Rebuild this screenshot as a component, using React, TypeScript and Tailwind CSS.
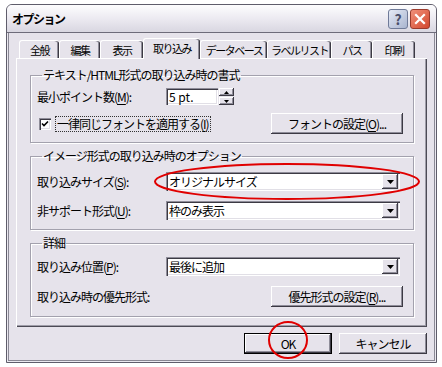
import React from "react";

// XP "silver" look: lavender-grey face, white/dark bevels
const face = "bg-[#e6e3eb]";
const raised =
  "shadow-[inset_-1px_-1px_0_#3c3a44,inset_1px_1px_0_#ffffff,inset_-2px_-2px_0_#8f8d99]";
const sunken =
  "shadow-[inset_1px_1px_0_#8f8d99,inset_2px_2px_0_#3c3a44,inset_-1px_-1px_0_#ffffff,inset_-2px_-2px_0_#e1dfe6]";

function Key({ children }: { children: React.ReactNode }) {
  return <span className="underline underline-offset-[2px]">{children}</span>;
}

function Arrow() {
  return (
    <svg width="7" height="4" viewBox="0 0 7 4">
      <path d="M0 0h7L3.5 4z" fill="#000" />
    </svg>
  );
}

function Select({ value }: { value: string }) {
  return (
    <div className={`flex h-[19px] w-[234px] items-center bg-white p-[2px] ${sunken}`}>
      <span className="flex-1 pl-[1px] leading-[15px]">{value}</span>
      <div className={`flex h-[15px] w-[16px] items-center justify-center ${face} ${raised}`}>
        <Arrow />
      </div>
    </div>
  );
}

function Button({ children, w, def }: { children: React.ReactNode; w: string; def?: boolean }) {
  return (
    <div className={`${w} ${def ? "border border-black" : ""}`}>
      <div
        className={`flex items-center justify-center ${def ? "h-[19px]" : "h-[21px]"} ${face} ${raised}`}
      >
        {children}
      </div>
    </div>
  );
}

function Row({ label, children }: { label: React.ReactNode; children: React.ReactNode }) {
  return (
    <div className="flex items-center">
      <span className="w-[129px]">{label}</span>
      {children}
    </div>
  );
}

function Group({
  title,
  className,
  children,
}: {
  title: string;
  className: string;
  children: React.ReactNode;
}) {
  return (
    <fieldset
      className={`mx-[13px] border border-[#a3a1ad] pl-[6px] pr-[10px] shadow-[1px_1px_0_#ffffff,inset_1px_1px_0_#ffffff] ${className}`}
    >
      <legend className="ml-[5px] px-[1px] leading-[14px]">{title}</legend>
      {children}
    </fieldset>
  );
}

const tabs = [
  { t: "全般", w: "w-[40px]" },
  { t: "編集", w: "w-[41px]" },
  { t: "表示", w: "w-[43px]" },
  { t: "取り込み", w: "w-[57px]", on: true },
  { t: "データベース", w: "w-[67px]" },
  { t: "ラベルリスト", w: "w-[64px]" },
  { t: "パス", w: "w-[41px]" },
  { t: "印刷", w: "w-[43px]" },
];

export default function App() {
  return (
    <div className="relative h-[367px] w-[442px] overflow-hidden whitespace-nowrap bg-white pt-[4px] font-['Noto_Sans_CJK_JP',sans-serif] text-[12px] leading-[14px] tracking-[-1px] text-black">
      <div
        className={`ml-[6px] h-[359px] w-[431px] rounded-t-[6px] border border-[#5f5d6b] ${face} shadow-[inset_0_0_0_1px_#ebe9f0,inset_0_0_0_2px_#8a8894]`}
      >
        {/* Title bar */}
        <div className="flex h-[28px] items-center justify-between rounded-t-[5px] border-b border-[#6e6c7a] bg-gradient-to-b from-[#fdfdfe] via-[#eceaf1] to-[#d9d7e1] pl-[5px] pr-[6px]">
          <span className="text-[12px] font-bold tracking-[-1.5px]">オプション</span>
          <div className="flex gap-[2px] tracking-normal">
            <div className="flex h-[20px] w-[20px] items-center justify-center rounded-[3px] border border-[#6f7a98] bg-gradient-to-br from-[#e6ebf6] to-[#a9b4cf] text-[14px] font-bold leading-none text-[#4a4f6a]">
              ?
            </div>
            <div className="flex h-[20px] w-[20px] items-center justify-center rounded-[3px] border border-[#9a3a2c] bg-gradient-to-br from-[#f0907a] to-[#d2452c]">
              <svg width="12" height="12" viewBox="0 0 12 12">
                <path d="M2 2l8 8M10 2l-8 8" stroke="#fff" strokeWidth="2.2" strokeLinecap="square" />
              </svg>
            </div>
          </div>
        </div>

        <div className="pl-[9px] pr-[9px] pt-[5px]">
          {/* Tabs */}
          <div className="flex h-[20px] items-end pl-[3px] text-[11px] tracking-[-1.5px]">
            {tabs.map((tab) => (
              <div
                key={tab.t}
                className={`${tab.w} flex items-center justify-center rounded-t-[3px] border-l border-t border-white shadow-[inset_-1px_0_0_#3c3a44,inset_-2px_0_0_#8f8d99] ${face} ${
                  tab.on ? "relative z-10 -mb-[1px] h-[21px] pb-[3px]" : "h-[18px]"
                }`}
              >
                {tab.t}
              </div>
            ))}
          </div>

          {/* Tab panel */}
          <div className="h-[269px] border-l border-t border-white shadow-[inset_-1px_-1px_0_#4c4a55,inset_-2px_-2px_0_#9f9da8]">
            <Group title="テキスト/HTML形式の取り込み時の書式" className="mt-[9px] pb-[8px] pt-[6px]">
              <Row
                label={
                  <>
                    最小ポイント数(<Key>M</Key>):
                  </>
                }
              >
                <div className="flex h-[17px]">
                  <div className={`flex w-[52px] items-center bg-white pl-[3px] tracking-normal ${sunken}`}>5 pt.</div>
                  <div className="ml-[1px] flex w-[15px] flex-col">
                    <div className={`flex h-[8px] items-center justify-center ${face} ${raised}`}>
                      <svg width="5" height="3" viewBox="0 0 5 3">
                        <path d="M0 3h5L2.5 0z" fill="#000" />
                      </svg>
                    </div>
                    <div className={`mt-[1px] flex h-[8px] items-center justify-center ${face} ${raised}`}>
                      <svg width="5" height="3" viewBox="0 0 5 3">
                        <path d="M0 0h5L2.5 3z" fill="#000" />
                      </svg>
                    </div>
                  </div>
                </div>
              </Row>
              <div className="mt-[8px] flex items-center justify-between">
                <div className="flex items-center pl-[2px]">
                  <div className={`flex h-[12px] w-[12px] items-center justify-center bg-white ${sunken}`}>
                    <svg width="8" height="8" viewBox="0 0 8 8">
                      <path d="M1 3.5l2 2L7 1.5" stroke="#000" strokeWidth="1.6" fill="none" />
                    </svg>
                  </div>
                  <span className="ml-[4px] border border-dotted border-[#333] px-[1px]">
                    一律同じフォントを適用する(<Key>I</Key>)
                  </span>
                </div>
                <Button w="w-[132px]">
                  フォントの設定(<Key>O</Key>)...
                </Button>
              </div>
            </Group>

            <Group title="イメージ形式の取り込み時のオプション" className="mt-[6px] pb-[9px] pt-[9px]">
              <Row
                label={
                  <>
                    取り込みサイズ(<Key>S</Key>):
                  </>
                }
              >
                <Select value="オリジナルサイズ" />
              </Row>
              <div className="mt-[10px]">
                <Row
                  label={
                    <>
                      非サポート形式(<Key>U</Key>):
                    </>
                  }
                >
                  <Select value="枠のみ表示" />
                </Row>
              </div>
            </Group>

            <Group title="詳細" className="mt-[6px] pb-[9px] pt-[7px]">
              <Row
                label={
                  <>
                    取り込み位置(<Key>P</Key>):
                  </>
                }
              >
                <Select value="最後に追加" />
              </Row>
              <div className="mt-[10px] flex items-center justify-between">
                <span>取り込み時の優先形式:</span>
                <Button w="w-[132px]">
                  優先形式の設定(<Key>R</Key>)...
                </Button>
              </div>
            </Group>
          </div>

          {/* Dialog buttons */}
          <div className="mt-[6px] flex justify-end gap-[7px]">
            <Button w="w-[88px]" def>
              OK
            </Button>
            <Button w="w-[88px]">キャンセル</Button>
          </div>
        </div>
      </div>

      {/* red hand-drawn annotations */}
      <svg className="pointer-events-none absolute left-0 top-0" width="442" height="367">
        <ellipse cx="287" cy="181.5" rx="132" ry="17.5" fill="none" stroke="#e00000" strokeWidth="2" />
        <ellipse cx="288" cy="340" rx="19" ry="18" fill="none" stroke="#e00000" strokeWidth="2" />
      </svg>
    </div>
  );
}
